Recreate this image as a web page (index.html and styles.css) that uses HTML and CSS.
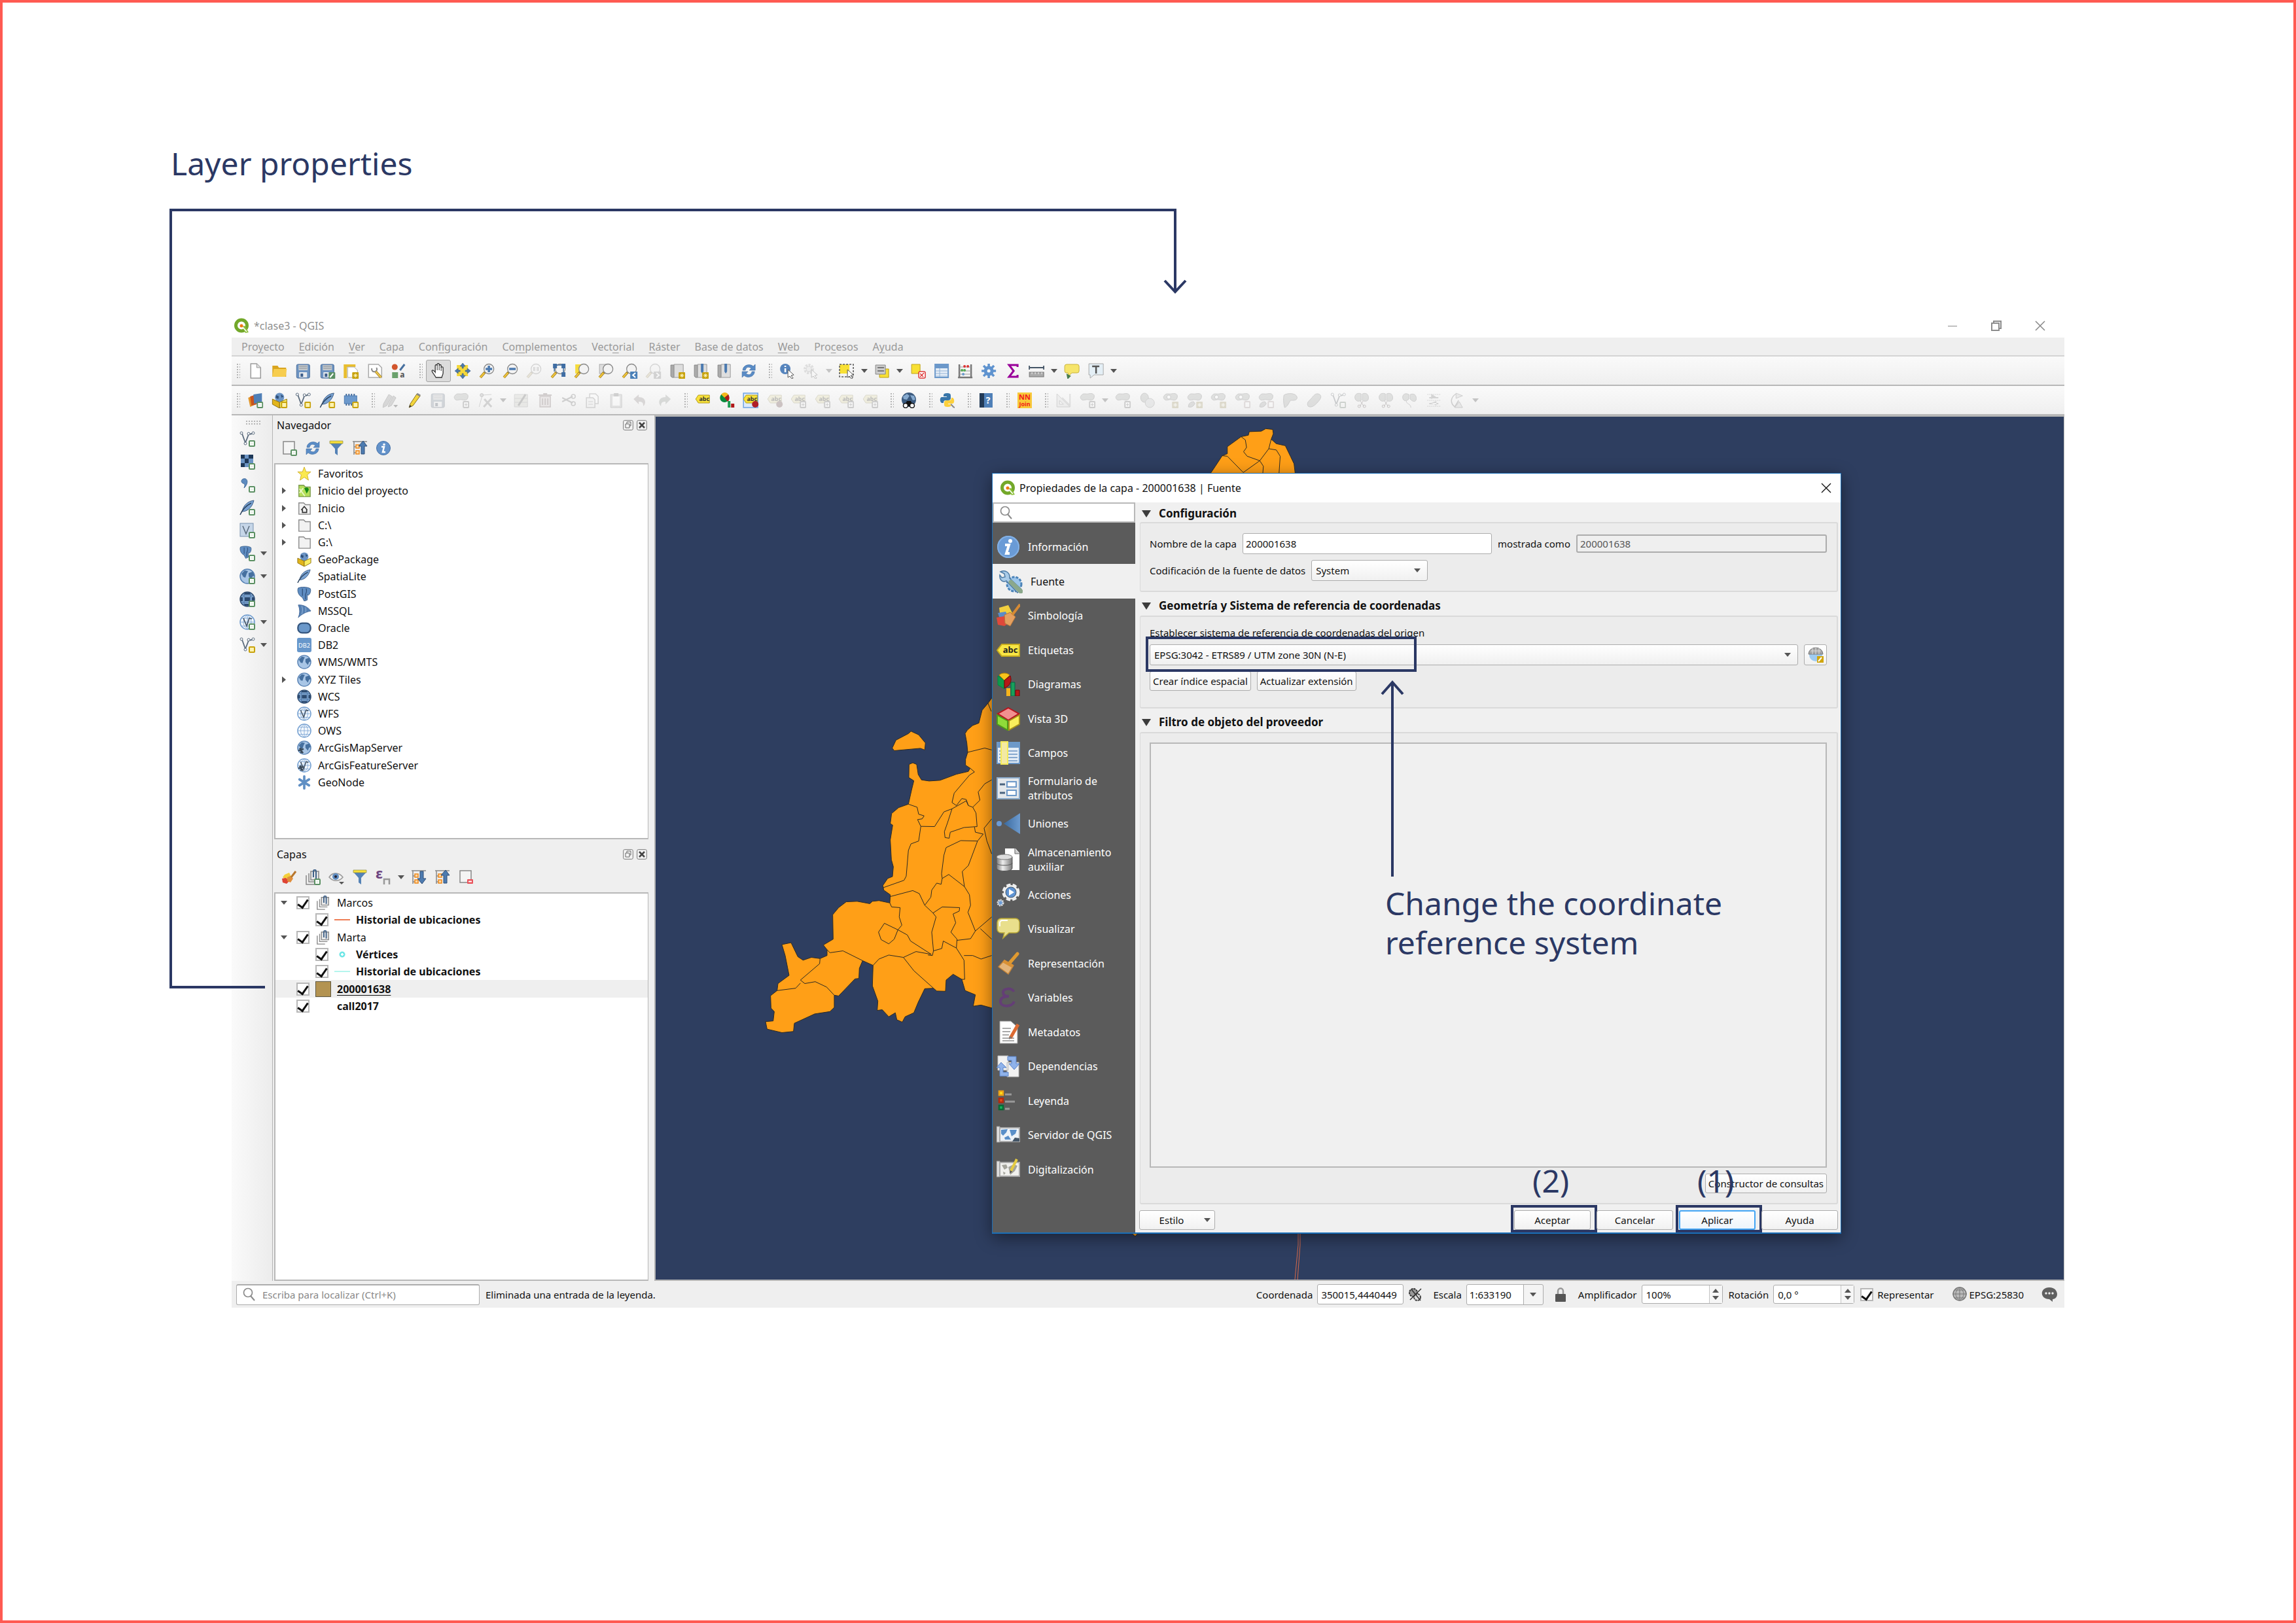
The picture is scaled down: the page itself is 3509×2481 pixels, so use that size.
FILE: index.html
```html
<!DOCTYPE html>
<html lang="es">
<head>
<meta charset="utf-8">
<title>Layer properties</title>
<link rel="stylesheet" href="styles.css">
</head>
<body>
<svg class="defs" aria-hidden="true">
  <!-- badges -->
  <symbol id="b-add" viewBox="0 0 24 24"><rect x="15" y="15" width="8" height="8" rx="1" fill="#fff" stroke="#5b9063" stroke-width="2"/><path d="M19 17v4M17 19h4" stroke="#dcebdc"/></symbol>
  <symbol id="b-new" viewBox="0 0 24 24"><rect x="14" y="14" width="10" height="10" rx="1" fill="#c8a20c"/><path d="M19 16v6M16 19h6M17 17l4 4M21 17l-4 4" stroke="#fff8c8"/></symbol>
  <symbol id="b-yellow" viewBox="0 0 24 24"><rect x="15" y="15" width="8" height="8" rx="1" fill="#fdf3b0" stroke="#c8a20c" stroke-width="2"/></symbol>
  <symbol id="b-gray" viewBox="0 0 24 24"><rect x="15" y="14" width="8" height="9" rx="1" fill="#fff" stroke="#777" stroke-width="2"/><path d="M19 16v5M17 18.500h4" stroke="#777"/></symbol>
  <symbol id="b-red" viewBox="0 0 24 24"><rect x="15" y="14" width="8" height="9" rx="1" fill="#fff" stroke="#c99" stroke-width="2"/></symbol>
  <!-- basic glyphs -->
  <symbol id="logo" viewBox="0 0 24 24"><circle cx="12" cy="11.500" r="8.500" fill="none" stroke="#73a82a" stroke-width="5"/><path d="M13 13l4-1 6 10-5 1z" fill="#8cbf3a"/><path d="M12 12l8 9" stroke="#fff" stroke-width="1.500"/><circle cx="12" cy="12" r="2.500" fill="#ee7913"/></symbol>
  <symbol id="new" viewBox="0 0 24 24"><path d="M5 1h9l6 6v16H5z" fill="#fff" stroke="#9a9a9a" stroke-width="1.500"/><path d="M14 1v6h6" fill="#ddd" stroke="#9a9a9a"/></symbol>
  <symbol id="open" viewBox="0 0 24 24"><path d="M1 4h8l2 3h11v14H1z" fill="#d9a51f"/><path d="M3 9h20l-2 12H1z" fill="#f7cd4e"/></symbol>
  <symbol id="save" viewBox="0 0 24 24"><rect x="2" y="2" width="20" height="21" rx="2" fill="#6c93c2" stroke="#4d6f9b"/><path d="M5 3h14v8H5z" fill="#c3c8cc"/><path d="M6 5h12M6 8h12" stroke="#8d9297"/><path d="M6 14h12v8H6z" fill="#e8ebee"/><path d="M8 16h4v5H8z" fill="#3d5f8c"/></symbol>
  <symbol id="saveas" viewBox="0 0 24 24"><use href="#save"/><rect x="14" y="14" width="10" height="10" rx="1" fill="#5b9063"/><path d="M16 22l5-6" stroke="#fff" stroke-width="2"/></symbol>
  <symbol id="layout" viewBox="0 0 24 24"><path d="M1 2h18v4H6v17H1z" fill="#e8bd2e"/><path d="M7 6h10l5 5v11H7z" fill="#fff" stroke="#aaa"/><use href="#b-new"/></symbol>
  <symbol id="layoutmgr" viewBox="0 0 24 24"><path d="M2 2h15l5 5v15H2z" fill="#fff" stroke="#aaa" stroke-width="1.500"/><path d="M7 8a4 4 0 107-1" fill="none" stroke="#888" stroke-width="2"/><path d="M13 13l8 9" stroke="#a8842a" stroke-width="4"/><path d="M13 13l8 9" stroke="#eec94d" stroke-width="2"/></symbol>
  <symbol id="style" viewBox="0 0 24 24"><circle cx="6" cy="6" r="4.500" fill="#d2552c"/><path d="M21 2l-7 9" stroke="#47709f" stroke-width="3"/><rect x="2" y="14" width="9" height="9" fill="#6aa16c"/><text x="14" y="22" font-family="Noto Sans" font-weight="700" font-size="12" fill="#555">a</text></symbol>
  <symbol id="hand" viewBox="0 0 24 24"><path d="M8 22c-2-4-6-8-6-10s3-1 5 2V4c0-2 3-2 3 0V2c0-2 3-2 3 0v2c0-2 3-2 3 0v3c0-2 3-1 3 0v8c0 3-2 5-2 7z" fill="#fff" stroke="#333" stroke-width="1.300"/><path d="M10 4v7M13 4v7M16 6v6" stroke="#333"/></symbol>
  <symbol id="pan" viewBox="0 0 24 24"><rect x="3" y="3" width="17" height="17" fill="#f5d83a"/><path d="M12 0l4 5h-3v3h-2V5H8zM12 24l-4-5h3v-3h2v3h3zM0 12l5-4v3h3v2H5v3zM24 12l-5 4v-3h-3v-2h3V8z" fill="#4b7ab0" stroke="#34577f" stroke-width=".6"/></symbol>
  <symbol id="mag" viewBox="0 0 24 24"><path d="M2 22l7-8" stroke="#9a7a20" stroke-width="4"/><path d="M2 22l6-7" stroke="#f0c43a" stroke-width="2.500"/><circle cx="15" cy="9" r="7.500" fill="#f3f3f3" stroke="#888" stroke-width="1.300"/></symbol>
  <symbol id="zin" viewBox="0 0 24 24"><use href="#mag"/><path d="M15 4v10M10 9h10" stroke="#4b7ab0" stroke-width="3.500"/></symbol>
  <symbol id="zout" viewBox="0 0 24 24"><use href="#mag"/><path d="M10 9h10" stroke="#4b7ab0" stroke-width="3.500"/></symbol>
  <symbol id="zone" viewBox="0 0 24 24"><use href="#mag"/><path d="M12 6v6M18 6v6M15 7v1M15 10v1" stroke="#666" stroke-width="1.500"/></symbol>
  <symbol id="zfull" viewBox="0 0 24 24"><use href="#mag"/><path d="M4 1h6v7H4zM17 1h6v7h-6zM17 14h6v7h-6z" fill="#3f6da3"/><path d="M6 4v9M8 3h11M20 6v11" stroke="#3f6da3" stroke-width="1.500"/></symbol>
  <symbol id="zsel" viewBox="0 0 24 24"><rect x="2" y="2" width="12" height="14" fill="#f6dc3c"/><use href="#mag"/></symbol>
  <symbol id="zlay" viewBox="0 0 24 24"><rect x="2" y="2" width="12" height="14" fill="#ddd" stroke="#aaa"/><use href="#mag"/></symbol>
  <symbol id="zlast" viewBox="0 0 24 24"><use href="#mag"/><rect x="13" y="13" width="11" height="11" fill="#4b80b8"/><path d="M21 15l-4 3.500 4 3.500" fill="none" stroke="#fff" stroke-width="2"/></symbol>
  <symbol id="znext" viewBox="0 0 24 24"><use href="#mag"/><rect x="13" y="13" width="11" height="11" fill="#888"/><path d="M17 15l4 3.500-4 3.500" fill="none" stroke="#fff" stroke-width="2"/></symbol>
  <symbol id="book" viewBox="0 0 24 24"><path d="M2 3h5v19H4l-2-2z" fill="#aaa" stroke="#888"/><path d="M7 2h14v20H7z" fill="#dedede" stroke="#999"/></symbol>
  <symbol id="newmap" viewBox="0 0 24 24"><use href="#book"/><use href="#b-new"/></symbol>
  <symbol id="bm" viewBox="0 0 24 24"><use href="#book"/><path d="M12 1h4v12l-2 3-2-3z" fill="#4b7ab0"/></symbol>
  <symbol id="newbm" viewBox="0 0 24 24"><use href="#bm"/><use href="#b-new"/></symbol>
  <symbol id="refresh" viewBox="0 0 24 24"><path d="M3 11C3 3 14 0 19 5l3-3v9h-9l3-3c-4-3-8-2-9 3zM21 13c0 8-11 11-16 6l-3 3v-9h9l-3 3c4 3 8 2 9-3z" fill="#5a8cc6" stroke="#3f6da3" stroke-width=".6"/></symbol>
  <symbol id="info" viewBox="0 0 24 24"><circle cx="12" cy="12" r="10.500" fill="#6392ca" stroke="#4673aa"/><circle cx="13" cy="6.500" r="1.800" fill="#fff"/><path d="M9 10h4l-2 8h4" fill="none" stroke="#fff" stroke-width="2.500"/></symbol>
  <symbol id="cursor" viewBox="0 0 24 24"><path d="M13 10l9 8-4 1 3 4-2 1-3-4-3 2z" fill="#fff" stroke="#555"/></symbol>
  <symbol id="ident" viewBox="0 0 24 24"><circle cx="9" cy="9" r="8" fill="#5584bd"/><path d="M9 4v2M9 8v6" stroke="#fff" stroke-width="2.500"/><use href="#cursor"/></symbol>
  <symbol id="action" viewBox="0 0 24 24"><circle cx="9" cy="9" r="6" fill="none" stroke="#aaa" stroke-width="4" stroke-dasharray="3 1.500"/><circle cx="9" cy="9" r="4" fill="#ddd" stroke="#999"/><use href="#cursor"/></symbol>
  <symbol id="select" viewBox="0 0 24 24"><rect x="1" y="2" width="15" height="14" fill="#f8e034"/><rect x="1" y="2" width="21" height="19" fill="none" stroke="#555" stroke-width="1.500" stroke-dasharray="3 2"/><use href="#cursor"/></symbol>
  <symbol id="selval" viewBox="0 0 24 24"><path d="M8 9h14v13H8z" fill="#f8e034" stroke="#b99f16"/><path d="M2 3h15v14H2z" fill="#ccc" stroke="#888"/><path d="M5 7h10M5 12h10" stroke="#777" stroke-width="2"/></symbol>
  <symbol id="desel" viewBox="0 0 24 24"><path d="M2 2h13v14H2z" fill="#f8e034" stroke="#c0a418"/><rect x="13" y="13" width="10" height="10" rx="2" fill="#fff" stroke="#dd3a3a" stroke-width="1.500"/><path d="M15 21l6-6M15 16l5 5" stroke="#dd3a3a" stroke-width="1.500"/></symbol>
  <symbol id="table" viewBox="0 0 24 24"><rect x="2" y="2" width="20" height="20" fill="#e6eef7" stroke="#6b98ca" stroke-width="2"/><path d="M2 3h20v5H2z" fill="#6b98ca"/><path d="M3 12h18M3 16h18M3 20h18M9 8v13" stroke="#93b3d6"/></symbol>
  <symbol id="abacus" viewBox="0 0 24 24"><path d="M3 2v19M21 2v19M1 22h22" stroke="#777" stroke-width="2.500"/><path d="M3 6h18M3 12h18M3 17h18" stroke="#999"/><circle cx="11" cy="5" r="2" fill="#d33"/><circle cx="16" cy="5" r="2" fill="#d33"/><circle cx="7" cy="11" r="2" fill="#5a5"/><circle cx="11" cy="11" r="2" fill="#5a5"/><circle cx="9" cy="17" r="2" fill="#69c"/></symbol>
  <symbol id="gear" viewBox="0 0 24 24"><path d="M12 1v22M1 12h22M4 4l16 16M20 4L4 20" stroke="#5f93cf" stroke-width="3.500"/><circle cx="12" cy="12" r="5" fill="#f4f6f8" stroke="#5f93cf" stroke-width="5"/></symbol>
  <symbol id="sigma" viewBox="0 0 24 24"><path d="M19 6V3H6l7 9-7 9h13v-3" fill="none" stroke="#990099" stroke-width="3"/></symbol>
  <symbol id="ruler" viewBox="0 0 24 24"><path d="M1 4v6M23 4v6M1 7h22" stroke="#456" stroke-width="1.800"/><rect x="1" y="14" width="22" height="7" fill="#aaa" stroke="#777"/><path d="M5 14v3M10 14v3M15 14v3M20 14v3" stroke="#eee"/></symbol>
  <symbol id="tip" viewBox="0 0 24 24"><path d="M4 2h16a3 3 0 013 3v7a3 3 0 01-3 3h-8l-5 5-1-5H4a3 3 0 01-3-3V5a3 3 0 013-3z" fill="#f6e56b" stroke="#c9b33c"/><path d="M5 18l4 2-3 3z" fill="#4a7d4d" stroke="#4a7d4d" stroke-width="2"/></symbol>
  <symbol id="textann" viewBox="0 0 24 24"><path d="M1 1h22v17H9l-6 5v-5H1z" fill="#e4eff6" stroke="#aaa"/><path d="M6 5h11M12 5v11" stroke="#555" stroke-width="2.500"/></symbol>
  <!-- data source glyphs -->
  <symbol id="dsm" viewBox="0 0 24 24"><path d="M1 8l12-5v15L4 22z" fill="#e0952a"/><path d="M4 6l10-3v15l-8 2z" fill="#c8541f"/><path d="M9 3l13-2v14l-12 2z" fill="#4f7fb7"/><use href="#b-add"/></symbol>
  <symbol id="gpkg" viewBox="0 0 24 24"><circle cx="12" cy="7.500" r="7" fill="#6b94c4"/><path d="M7 4l4 2-1 4-4-2zM14 3l4 3-3 2z" fill="#2f4f78"/><path d="M1 10l11 5v9L1 18z" fill="#e2b51b" stroke="#8d7010"/><path d="M23 10l-11 5v9l11-6z" fill="#f9ed62" stroke="#8d7010"/></symbol>
  <symbol id="gpkgnew" viewBox="0 0 24 24"><use href="#gpkg"/><use href="#b-yellow"/></symbol>
  <symbol id="vee" viewBox="0 0 24 24"><path d="M4 4l5 14 5-13 5-1" fill="none" stroke="#5b6b7d" stroke-width="1.800"/><circle cx="3" cy="3" r="2" fill="#fff" stroke="#5b6b7d"/><circle cx="9" cy="19" r="2" fill="#fff" stroke="#5b6b7d"/><circle cx="14" cy="4" r="2" fill="#fff" stroke="#5b6b7d"/><circle cx="21" cy="3" r="2" fill="#fff" stroke="#5b6b7d"/></symbol>
  <symbol id="veenew" viewBox="0 0 24 24"><use href="#vee"/><use href="#b-yellow"/></symbol>
  <symbol id="veeadd" viewBox="0 0 24 24"><use href="#vee"/><use href="#b-add"/></symbol>
  <symbol id="feather" viewBox="0 0 24 24"><path d="M22 1C13 2 6 8 4 18c7 0 15-5 18-17z" fill="#7aa3d3" stroke="#3d5d85"/><path d="M1 23C4 16 10 9 18 5" fill="none" stroke="#2c4460" stroke-width="1.500"/></symbol>
  <symbol id="feathernew" viewBox="0 0 24 24"><use href="#feather"/><use href="#b-yellow"/></symbol>
  <symbol id="featheradd" viewBox="0 0 24 24"><use href="#feather"/><use href="#b-add"/></symbol>
  <symbol id="memory" viewBox="0 0 24 24"><path d="M5 2v18M9 2v18M13 2v18M17 2v18" stroke="#3d6699" stroke-width="2"/><rect x="2" y="5" width="19" height="12" fill="#6c99cc" stroke="#4a78ae"/><use href="#b-yellow"/></symbol>
  <symbol id="raster" viewBox="0 0 24 24"><path d="M2 1h19v19H2z" fill="#6b94c4"/><path d="M2 1h6v6H2zM14 1h7v6h-7zM8 7h6v7H8zM2 14h6v6H2z" fill="#1e3857"/><use href="#b-add"/></symbol>
  <symbol id="comma" viewBox="0 0 24 24"><path d="M6 3c6-2 9 6 1 14 2-5 1-6-1-7-4-1-4-6 0-7z" fill="#5d8bc0" stroke="#426b9b"/><use href="#b-add"/></symbol>
  <symbol id="virtual" viewBox="0 0 24 24"><rect x="1" y="1" width="20" height="20" fill="#c6d6e8" stroke="#7892b0"/><path d="M5 5l5 12 5-12" fill="none" stroke="#5b6b7d" stroke-width="1.500"/><use href="#b-add"/></symbol>
  <symbol id="elephant" viewBox="0 0 24 24"><path d="M2 2c5-2 15-2 20 1 2 4-1 10-3 11l-2-1v9l-5 2-3-6-4-3C2 12 0 6 2 2z" fill="#5f8dc2" stroke="#355a85"/><path d="M9 3v12M15 3c2 4 0 8-1 10v8" fill="none" stroke="#2f4f78" stroke-width="1.300"/></symbol>
  <symbol id="pgadd" viewBox="0 0 24 24"><use href="#elephant" width="19" height="20"/><use href="#b-add"/></symbol>
  <symbol id="mssql" viewBox="0 0 24 24"><path d="M2 2c8-1 17 4 21 10C16 13 8 17 2 23c3-7 3-14 0-21z" fill="#5580b2" stroke="#43689a"/><path d="M8 4c2 5 1 9 0 13M14 6c1 3 1 6 0 8" fill="none" stroke="#9fbde0"/></symbol>
  <symbol id="oracle" viewBox="0 0 24 24"><rect x="1.500" y="4" width="21" height="16" rx="7" fill="#6b98ca" stroke="#35567f" stroke-width="2.500"/></symbol>
  <symbol id="db2" viewBox="0 0 24 24"><rect width="24" height="24" rx="3" fill="#6797cb"/><text x="12" y="16" text-anchor="middle" font-family="Noto Sans" font-size="10" fill="#fff">DB2</text></symbol>
  <symbol id="globe" viewBox="0 0 24 24"><circle cx="12" cy="12" r="11" fill="#a9c6e6" stroke="#547fb2" stroke-width="1.500"/><path d="M3 8l5-5 5 1-2 4-2 6-3-1zM14 7l6-2 3 6-3 1-2 5-4-5z" fill="#46709f"/></symbol>
  <symbol id="grid" viewBox="0 0 24 24"><circle cx="12" cy="12" r="11" fill="#f3f8fd" stroke="#6e9bce" stroke-width="1.500"/><path d="M1 12h22M3 6h18M3 18h18M12 1v22M12 1c-8 6-8 16 0 22M12 1c8 6 8 16 0 22" fill="none" stroke="#85abd6"/></symbol>
  <symbol id="wcs" viewBox="0 0 24 24"><circle cx="12" cy="12" r="11" fill="#86acd6" stroke="#2c486b" stroke-width="1.500"/><path d="M8 9h8v6H8zM1 9h4v6H1zM19 9h4v6h-4zM7 2h10v3H7zM7 19h10v3H7z" fill="#2c4a70"/><path d="M7 2v20M17 2v20M2 7h20M2 17h20" stroke="#4d75a5"/></symbol>
  <symbol id="wfs" viewBox="0 0 24 24"><use href="#grid"/><path d="M6 6l5 12 4-12 4 1" fill="none" stroke="#4b5b6d" stroke-width="1.800"/></symbol>
  <symbol id="arcmap" viewBox="0 0 24 24"><use href="#globe"/><path d="M6 12l1 9M2 17l9-3M4 13l6 8" stroke="#3a4a5a" stroke-width="2.500"/></symbol>
  <symbol id="arcfeat" viewBox="0 0 24 24"><use href="#wfs"/><path d="M6 12l1 9M2 17l9-3M4 13l6 8" stroke="#3a4a5a" stroke-width="2.500"/></symbol>
  <symbol id="wmsadd" viewBox="0 0 24 24"><use href="#globe"/><use href="#b-add"/></symbol>
  <symbol id="wcsadd" viewBox="0 0 24 24"><use href="#wcs"/><use href="#b-add"/></symbol>
  <symbol id="wfsadd" viewBox="0 0 24 24"><use href="#wfs"/><use href="#b-add"/></symbol>
  <symbol id="geonode" viewBox="0 0 24 24"><path d="M12 2v20M4 7l16 10M20 7L4 17" stroke="#5f8fc4" stroke-width="4" stroke-linecap="round"/></symbol>
  <symbol id="star" viewBox="0 0 24 24"><path d="M12 1l3 8h8l-6 5 2 9-7-5-7 5 2-9-6-5h8z" fill="#fbe94e" stroke="#cfae28"/></symbol>
  <symbol id="folder" viewBox="0 0 24 24"><path d="M3 3h8l3 3h8v16H3z" fill="#f2f2f2" stroke="#8a8a8a" stroke-width="1.500"/></symbol>
  <symbol id="home" viewBox="0 0 24 24"><use href="#folder"/><path d="M7 15l5-6 5 6M9 14v5h7v-5" fill="none" stroke="#333" stroke-width="1.800"/></symbol>
  <symbol id="projhome" viewBox="0 0 24 24"><path d="M3 3h8l3 3h8v16H3z" fill="#b6e05a" stroke="#7d9a50" stroke-width="1.500"/><path d="M4 9l9 12M10 8l-6 8" stroke="#eaf7c8" stroke-width="2"/><path d="M12 8c5-3 9 0 7 4l-3 5z" fill="#158a15"/></symbol>
  <!-- editing glyphs -->
  <symbol id="pencil" viewBox="0 0 24 24"><path d="M7 17L17 2l5 3-11 15-6 3z" fill="#f3d53c" stroke="#8a7420"/><path d="M5 23l1-4 3 2z" fill="#333"/><path d="M17 2l5 3" stroke="#888" stroke-width="3"/></symbol>
  <symbol id="pencils" viewBox="0 0 24 24"><path d="M2 17L10 3l5 3-8 14-6 3zM10 18l7-13 4 3-7 12-5 2z" fill="#999" stroke="#666"/><path d="M17 19h7l-3.500 4z" fill="#333"/></symbol>
  <symbol id="blob" viewBox="0 0 24 24"><path d="M2 5c3-5 7-2 11-3s10-1 9 5-6 5-9 4-8 2-10 0-3-4-1-6z" fill="#a9b0a6" stroke="#777"/></symbol>
  <symbol id="blobadd" viewBox="0 0 24 24"><use href="#blob"/><use href="#b-gray"/></symbol>
  <symbol id="blobring" viewBox="0 0 24 24"><use href="#blob"/><circle cx="9" cy="7" r="3" fill="#fff" stroke="#777"/><use href="#b-new"/></symbol>
  <symbol id="blobpart" viewBox="0 0 24 24"><use href="#blob"/><path d="M2 22c0-5 3-8 8-8l2 3c-3 5-6 6-10 5z" fill="#a9b0a6" stroke="#777"/><use href="#b-new"/></symbol>
  <symbol id="delring" viewBox="0 0 24 24"><use href="#blob"/><circle cx="9" cy="7" r="3" fill="#fff" stroke="#777"/><use href="#b-red"/></symbol>
  <symbol id="delpart" viewBox="0 0 24 24"><use href="#blob"/><path d="M2 22c0-5 3-8 8-8l2 3c-3 5-6 6-10 5z" fill="#a9b0a6" stroke="#777"/><use href="#b-red"/></symbol>
  <symbol id="simplify" viewBox="0 0 24 24"><ellipse cx="8" cy="8" rx="6" ry="7" fill="#a9b0a6" stroke="#777"/><ellipse cx="16" cy="16" rx="7" ry="7" fill="#c8ccd0" stroke="#888"/></symbol>
  <symbol id="reshape" viewBox="0 0 24 24"><path d="M2 4c6-4 19-3 20 3s-7 5-10 5c-3 5-5 10-9 11-2-7-2-14-1-19z" fill="#a9b0a6" stroke="#777"/></symbol>
  <symbol id="offset" viewBox="0 0 24 24"><path d="M3 21c-3-5 1-8 4-11s6-9 11-8 6 5 2 10-11 13-17 9z" fill="#a9b0a6" stroke="#777"/></symbol>
  <symbol id="scissor" viewBox="0 0 24 24"><path d="M11 12V2C3-1 0 6 2 10s6 4 9 2zM13 12V2c8-3 10 4 9 8s-6 4-9 2z" fill="#a9b0a6" stroke="#777"/><path d="M10 13l5 8M14 13l-5 8" stroke="#755"/><circle cx="8" cy="21" r="2" fill="none" stroke="#755"/><circle cx="16" cy="21" r="2" fill="none" stroke="#755"/></symbol>
  <symbol id="merge" viewBox="0 0 24 24"><path d="M11 10V3C3-1 0 6 2 10s6 3 9 0zM13 10V3c8-3 10 4 9 8s-6 3-9-1z" fill="#a9b0a6" stroke="#777"/><path d="M7 13c0 5 7 4 7 10" fill="none" stroke="#777"/></symbol>
  <symbol id="attrs" viewBox="0 0 24 24"><path d="M2 3h20M2 12h20M2 21h20" stroke="#888" stroke-dasharray="2 1"/><path d="M8 2l8 5-8 3zM16 13l-8 3 8 4zM5 7h14v2H5zM5 16h14v2H5z" fill="#888"/></symbol>
  <symbol id="rotate" viewBox="0 0 24 24"><path d="M10 2C1 8 1 16 8 22l6-10" fill="none" stroke="#777" stroke-width="1.500"/><path d="M10 1v8l10-4zM8 23h12l-5-9z" fill="#ccc" stroke="#777"/></symbol>
  <symbol id="vertex" viewBox="0 0 24 24"><path d="M2 22l5-18 14-1" fill="none" stroke="#888"/><circle cx="6" cy="4" r="2.500" fill="#aaa" stroke="#666"/><path d="M9 22l12-13M10 10l11 12" stroke="#888" stroke-width="3"/></symbol>
  <symbol id="multiedit" viewBox="0 0 24 24"><path d="M2 3h20v19H2z" fill="#cfd3b8" stroke="#999"/><path d="M2 9h20M2 15h20" stroke="#999"/><path d="M8 20L19 3" stroke="#666" stroke-width="3"/></symbol>
  <symbol id="trash" viewBox="0 0 24 24"><path d="M4 6h16v16H4z" fill="#e3c6c6" stroke="#966" stroke-width="1.500"/><path d="M2 4h20M9 2h6M8 9v10M12 9v10M16 9v10" stroke="#966" stroke-width="1.800"/></symbol>
  <symbol id="cut" viewBox="0 0 24 24"><path d="M2 8l16 8M2 14l16-8" stroke="#777" stroke-width="2"/><circle cx="19" cy="6" r="3" fill="none" stroke="#777" stroke-width="1.500"/><circle cx="19" cy="17" r="3" fill="none" stroke="#777" stroke-width="1.500"/></symbol>
  <symbol id="copy" viewBox="0 0 24 24"><path d="M8 2h9l4 4v11H8z" fill="#fff" stroke="#888" stroke-width="1.500"/><path d="M3 8h10l3 3v12H3z" fill="#eee" stroke="#888" stroke-width="1.500"/><path d="M6 14h7M6 18h7" stroke="#888"/></symbol>
  <symbol id="paste" viewBox="0 0 24 24"><path d="M3 3h17v20H3z" fill="#bbb" stroke="#888"/><path d="M6 6h11v14H6z" fill="#fff"/><path d="M8 1h7v5H8z" fill="#777"/></symbol>
  <symbol id="undo" viewBox="0 0 24 24"><path d="M2 10l8-7v4c9 0 13 7 7 14 0-6-2-7-7-7v4z" fill="#a98f8f"/></symbol>
  <symbol id="redo" viewBox="0 0 24 24"><path d="M22 10l-8-7v4C5 7 1 14 7 21c0-6 2-7 7-7v4z" fill="#8f9f8f"/></symbol>
  <symbol id="tag" viewBox="0 0 24 24"><path d="M1 10l4-6h17v12H5z" fill="#f8e23a" stroke="#b39b1c"/><text x="14" y="13" text-anchor="middle" font-family="Noto Sans" font-weight="700" font-size="9" fill="#333">abc</text></symbol>
  <symbol id="tagpin" viewBox="0 0 24 24"><use href="#tag"/><circle cx="19" cy="18" r="5" fill="#a84848"/></symbol>
  <symbol id="tagbox" viewBox="0 0 24 24"><rect x="1" y="1" width="22" height="22" fill="#dceafb" stroke="#6ea3e3" stroke-width="1.500"/><use href="#tag"/><circle cx="19" cy="18" r="5" fill="#b01e28"/></symbol>
  <symbol id="tagadd" viewBox="0 0 24 24"><use href="#tag"/><use href="#b-gray"/></symbol>
  <symbol id="diag" viewBox="0 0 24 24"><circle cx="8" cy="8" r="7" fill="#0a8a3c"/><path d="M8 8L3 3c3-4 8-4 11 0z" fill="#f4b81c"/><path d="M8 8l6-5c2 4 2 8-1 11z" fill="#b01818"/><path d="M13 13h4v10h-4z" fill="#1c9c50"/><path d="M18 17h5v6h-5z" fill="#b01818"/></symbol>
  <symbol id="metasearch" viewBox="0 0 24 24"><circle cx="12" cy="11" r="11" fill="#3b5a7e"/><path d="M3 6l6-4 4 3-4 6-5-1zM14 4l6 1 2 6-4 1z" fill="#86aacf"/><path d="M5 21l4-8h6l4 8z" fill="#111"/><circle cx="7" cy="20" r="3.500" fill="#fff" stroke="#111" stroke-width="1.500"/><circle cx="17" cy="20" r="3.500" fill="#fff" stroke="#111" stroke-width="1.500"/></symbol>
  <symbol id="python" viewBox="0 0 24 24"><path d="M11 1c5 0 6 1 6 4v4c0 2-2 3-4 3H9c-2 0-3 1-3 4H3c-3-2-3-8 0-9h8V6H6V4c0-2 2-3 5-3z" fill="#3775a9"/><path d="M13 22c-5 0-6-1-6-4v-3c0-2 2-3 4-3h4c2 0 3-1 3-4h2c3 2 3 8 0 9h-7v1h5v1c0 2-2 3-5 3z" fill="#fcd03c"/><path d="M17 18c2 0 3 5 6 5" stroke="#888" stroke-width="2" fill="none"/></symbol>
  <symbol id="help" viewBox="0 0 24 24"><rect x="2" y="1" width="20" height="22" fill="#4f80b8"/><rect x="2" y="1" width="7" height="22" fill="#223a56"/><text x="15" y="17" text-anchor="middle" font-family="Noto Sans" font-weight="700" font-size="14" fill="#fff">?</text></symbol>
  <symbol id="nn" viewBox="0 0 24 24"><rect x="1" width="22" height="24" fill="#f8c93a"/><text x="12" y="11" text-anchor="middle" font-family="Noto Sans" font-weight="700" font-size="11" fill="#f21c1c">NN</text><text x="12" y="21" text-anchor="middle" font-family="Noto Sans" font-weight="700" font-size="9" fill="#f21c1c">Join</text></symbol>
  <symbol id="cad" viewBox="0 0 24 24"><path d="M2 2v20h20zM6 12v6h6z" fill="#ddd" fill-rule="evenodd" stroke="#888"/><path d="M22 2v18L10 8" fill="none" stroke="#aaa" stroke-width="2"/></symbol>
  <!-- panel glyphs -->
  <symbol id="addlay" viewBox="0 0 24 24"><path d="M3 2h17v19H3z" fill="#f4f4f4" stroke="#888" stroke-width="1.500"/><use href="#b-add"/></symbol>
  <symbol id="removelay" viewBox="0 0 24 24"><path d="M3 2h17v18H3z" fill="#f4f4f4" stroke="#888" stroke-width="1.500"/><rect x="14" y="15" width="9" height="7" rx="1" fill="#e9545c"/><path d="M16 18.500h5" stroke="#fff" stroke-width="2"/></symbol>
  <symbol id="filter" viewBox="0 0 24 24"><path d="M2 4h20l-8 9v10l-4-3v-7z" fill="#5482b6"/><path d="M2 1h20v4H2z" fill="#f8e03a" stroke="#8a8a4a" stroke-width=".7"/></symbol>
  <symbol id="listbits" viewBox="0 0 24 24"><path d="M1 2h22M3 2v20M3 10h4M3 19h4" fill="none" stroke="#888" stroke-width="1.500"/><path d="M6 7h5v5H6zM6 16h5v5H6z" fill="#fbd7a6" stroke="#ef8a1c" stroke-width="1.500"/></symbol>
  <symbol id="collapse" viewBox="0 0 24 24"><use href="#listbits"/><path d="M17 1l6 8h-4v12h-5V9h-4z" fill="#4d7bb0" stroke="#2f4f78"/></symbol>
  <symbol id="expand" viewBox="0 0 24 24"><use href="#listbits"/><path d="M17 22l6-8h-4V3h-5v11h-4z" fill="#4d7bb0" stroke="#2f4f78"/></symbol>
  <symbol id="brush" viewBox="0 0 24 24"><path d="M5 8l7-3 3 6-7 6-6-5z" fill="#f3cf3c"/><path d="M1 14l6-1 5 5-4 4-6-2z" fill="#de4434"/><path d="M9 12l5-2 4 4-4 6-5-2z" fill="#e08e3a"/><path d="M15 12l7-9" stroke="#b8762c" stroke-width="3"/></symbol>
  <symbol id="group" viewBox="0 0 24 24"><path d="M2 9v14h13M6 6v13h13" fill="none" stroke="#888" stroke-width="1.500"/><path d="M9 3h12v13H9z" fill="#e9e9e9" stroke="#888" stroke-width="1.500"/><path d="M13 12V3c0-3 4-3 4 0v11" fill="none" stroke="#3f6188" stroke-width="2"/></symbol>
  <symbol id="groupadd" viewBox="0 0 24 24"><use href="#group"/><use href="#b-add"/></symbol>
  <symbol id="eye" viewBox="0 0 24 24"><path d="M1 12C6 4 16 4 22 12c-6 7-15 7-21 0z" fill="#f2f2f2" stroke="#999" stroke-width="1.500"/><circle cx="11" cy="11" r="5" fill="#5e8cc0"/><circle cx="11" cy="11" r="2" fill="#223"/><path d="M16 19h8l-4 4z" fill="#555"/></symbol>
  <symbol id="expr" viewBox="0 0 24 24"><text x="0" y="14" font-family="Noto Sans" font-weight="700" font-size="22" fill="#6d4480">ε</text><path d="M13 23v-8h8v8M15 15h4" fill="none" stroke="#999" stroke-width="2.500"/></symbol>
  <symbol id="search" viewBox="0 0 24 24"><circle cx="10" cy="9" r="6.500" fill="none" stroke="#8a8a8a" stroke-width="1.700"/><path d="M14 14l6 7" stroke="#8a8a8a" stroke-width="2"/></symbol>
  <symbol id="float" viewBox="0 0 16 16"><rect x=".7" y=".7" width="14.600" height="14.600" rx="2" fill="#f4f4f4" stroke="#777"/><path d="M6 3h6v6H6z" fill="none" stroke="#666"/><path d="M4 6h6v6H4z" fill="#f4f4f4" stroke="#666"/></symbol>
  <symbol id="shut" viewBox="0 0 16 16"><rect x=".7" y=".7" width="14.600" height="14.600" rx="2" fill="#f4f4f4" stroke="#777"/><path d="M4 4l8 8M12 4l-8 8" stroke="#444" stroke-width="2.500"/></symbol>
  <!-- status bar glyphs -->
  <symbol id="extents" viewBox="0 0 24 24"><circle cx="9" cy="9" r="6" fill="#999" stroke="#333" stroke-width="2" stroke-dasharray="3 1"/><circle cx="15" cy="16" r="5" fill="#ddd" stroke="#444" stroke-width="2" stroke-dasharray="3 1"/><path d="M4 20L21 3M6 4l14 17" stroke="#333" stroke-width="1.500"/></symbol>
  <symbol id="lock" viewBox="0 0 24 24"><path d="M8 12V7c0-6 8-6 8 0v5" fill="none" stroke="#999" stroke-width="2.500"/><rect x="4" y="11" width="16" height="12" rx="1" fill="#555"/></symbol>
  <symbol id="crs" viewBox="0 0 24 24"><circle cx="12" cy="11" r="10" fill="#bbb" stroke="#777" stroke-width="1.500"/><path d="M1 11h22M4 5h16M4 17h16M12 1v20M12 1c-8 6-8 14 0 20M12 1c8 6 8 14 0 20" fill="none" stroke="#777"/></symbol>
  <symbol id="msg" viewBox="0 0 24 24"><path d="M12 1c15 0 15 18 5 18v4l-5-4C-3 19-3 1 12 1z" fill="#606060"/><circle cx="7" cy="10" r="1.700" fill="#eee"/><circle cx="12" cy="10" r="1.700" fill="#eee"/><circle cx="17" cy="10" r="1.700" fill="#eee"/></symbol>
  <symbol id="crspick" viewBox="0 0 24 24"><circle cx="12" cy="12" r="10" fill="#9fcbf0"/><path d="M1 11a11 10 0 0122 0z" fill="#a5a5a5" stroke="#777"/><path d="M4 6h16M12 1v10M7 2v9M17 2v9" stroke="#ddd"/><rect x="14" y="14" width="10" height="10" fill="#d1a60e"/><path d="M16 22l5-6" stroke="#fff" stroke-width="2"/></symbol>
</svg>

<div class="sheet">
  <h1 class="note">Layer properties</h1>

  <div class="app">
    <header class="titlebar">
      <svg class="ic"><use href="#logo"/></svg>
      <span>*clase3 - QGIS</span>
      <div class="winbtns">
        <button aria-label="Minimizar"><svg viewBox="0 0 16 16"><path d="M1 8.500h14" stroke="#888"/></svg></button>
        <button aria-label="Restaurar"><svg viewBox="0 0 16 16"><path d="M4 4V1h11v11h-3M1 4h11v11H1z" fill="none" stroke="#8c8c8c" stroke-width="2"/></svg></button>
        <button aria-label="Cerrar"><svg viewBox="0 0 16 16"><path d="M1 1l14 14M15 1L1 15" stroke="#888" stroke-width="1.500"/></svg></button>
      </div>
    </header>
    <nav class="menu">
      <a href="#">Pro<u>y</u>ecto</a><a href="#"><u>E</u>dición</a><a href="#"><u>V</u>er</a><a href="#"><u>C</u>apa</a><a href="#">Con<u>f</u>iguración</a><a href="#">Co<u>m</u>plementos</a><a href="#">Vect<u>o</u>rial</a><a href="#"><u>R</u>áster</a><a href="#">Base de <u>d</u>atos</a><a href="#"><u>W</u>eb</a><a href="#">Pro<u>c</u>esos</a><a href="#">A<u>y</u>uda</a>
    </nav>

    <div class="toolbar">
      <i class="grip"></i>
      <div class="tools w7">
        <svg><use href="#new"/></svg><svg><use href="#open"/></svg><svg><use href="#save"/></svg><svg><use href="#saveas"/></svg><svg><use href="#layout"/></svg><svg><use href="#layoutmgr"/></svg><svg><use href="#style"/></svg>
      </div>
      <i class="grip"></i>
      <div class="tools w14">
        <svg class="pressed"><use href="#hand"/></svg><svg><use href="#pan"/></svg><svg><use href="#zin"/></svg><svg><use href="#zout"/></svg><svg class="off"><use href="#zone"/></svg><svg><use href="#zfull"/></svg><svg><use href="#zsel"/></svg><svg><use href="#zlay"/></svg><svg><use href="#zlast"/></svg><svg class="off"><use href="#znext"/></svg><svg><use href="#newmap"/></svg><svg><use href="#newbm"/></svg><svg><use href="#bm"/></svg><svg><use href="#refresh"/></svg>
      </div>
      <i class="grip"></i>
      <div class="tools w12">
        <svg><use href="#ident"/></svg><svg class="off"><use href="#action"/></svg><b class="drop off"></b><svg><use href="#select"/></svg><b class="drop"></b><svg><use href="#selval"/></svg><b class="drop"></b><svg><use href="#desel"/></svg><svg><use href="#table"/></svg><svg><use href="#abacus"/></svg><svg><use href="#gear"/></svg><svg><use href="#sigma"/></svg><svg><use href="#ruler"/></svg><b class="drop"></b><svg><use href="#tip"/></svg><svg><use href="#textann"/></svg><b class="drop"></b>
      </div>
    </div>

    <div class="toolbar">
      <i class="grip"></i>
      <div class="tools w5">
        <svg><use href="#dsm"/></svg><svg><use href="#gpkgnew"/></svg><svg><use href="#veenew"/></svg><svg><use href="#feathernew"/></svg><svg><use href="#memory"/></svg>
      </div>
      <i class="grip"></i>
      <div class="tools w13">
        <svg class="off"><use href="#pencils"/></svg><svg><use href="#pencil"/></svg><svg class="off"><use href="#save"/></svg><svg class="off"><use href="#blobadd"/></svg><svg class="off"><use href="#vertex"/></svg><b class="drop off"></b><svg class="off"><use href="#multiedit"/></svg><svg class="off"><use href="#trash"/></svg><svg class="off"><use href="#cut"/></svg><svg class="off"><use href="#copy"/></svg><svg class="off"><use href="#paste"/></svg><svg class="off"><use href="#undo"/></svg><svg class="off"><use href="#redo"/></svg>
      </div>
      <i class="grip"></i>
      <div class="tools w8">
        <svg><use href="#tag"/></svg><svg><use href="#diag"/></svg><svg><use href="#tagbox"/></svg><svg class="off"><use href="#tagpin"/></svg><svg class="off"><use href="#tagadd"/></svg><svg class="off"><use href="#tagadd"/></svg><svg class="off"><use href="#tagadd"/></svg><svg class="off"><use href="#tagadd"/></svg>
      </div>
      <i class="grip"></i><div class="tools w1"><svg><use href="#metasearch"/></svg></div>
      <i class="grip"></i><div class="tools w1"><svg><use href="#python"/></svg></div>
      <i class="grip"></i><div class="tools w1"><svg><use href="#help"/></svg></div>
      <i class="grip"></i><div class="tools w1"><svg><use href="#nn"/></svg></div>
      <i class="grip"></i>
      <div class="tools w18 allOff">
        <svg><use href="#cad"/></svg><svg><use href="#blobadd"/></svg><b class="drop"></b><svg><use href="#blobadd"/></svg><svg><use href="#simplify"/></svg><svg><use href="#blobring"/></svg><svg><use href="#blobpart"/></svg><svg><use href="#blobring"/></svg><svg><use href="#delring"/></svg><svg><use href="#delpart"/></svg><svg><use href="#reshape"/></svg><svg><use href="#offset"/></svg><svg><use href="#veeadd"/></svg><svg><use href="#scissor"/></svg><svg><use href="#scissor"/></svg><svg><use href="#merge"/></svg><svg><use href="#attrs"/></svg><svg><use href="#rotate"/></svg><b class="drop"></b>
      </div>
    </div>

    <main class="work">
      <div class="sidetools">
        <i class="grip flat"></i>
        <div><svg><use href="#veeadd"/></svg></div>
        <div><svg><use href="#raster"/></svg></div>
        <div><svg><use href="#comma"/></svg></div>
        <div><svg><use href="#featheradd"/></svg></div>
        <div><svg><use href="#virtual"/></svg></div>
        <div><svg><use href="#pgadd"/></svg><b class="drop"></b></div>
        <div><svg><use href="#wmsadd"/></svg><b class="drop"></b></div>
        <div><svg><use href="#wcsadd"/></svg></div>
        <div><svg><use href="#wfsadd"/></svg><b class="drop"></b></div>
        <div><svg><use href="#veenew"/></svg><b class="drop"></b></div>
      </div>

      <div class="docks">
        <section class="dock">
          <h2>Navegador<span><svg><use href="#float"/></svg><svg><use href="#shut"/></svg></span></h2>
          <div class="docktools"><svg><use href="#addlay"/></svg><svg><use href="#refresh"/></svg><svg><use href="#filter"/></svg><svg><use href="#collapse"/></svg><svg><use href="#info"/></svg></div>
          <div class="listbox browser">
            <ul class="tree t19">
              <li><i></i><svg><use href="#star"/></svg>Favoritos</li>
              <li><i class="closed"></i><svg><use href="#projhome"/></svg>Inicio del proyecto</li>
              <li><i class="closed"></i><svg><use href="#home"/></svg>Inicio</li>
              <li><i class="closed"></i><svg><use href="#folder"/></svg>C:\</li>
              <li><i class="closed"></i><svg><use href="#folder"/></svg>G:\</li>
              <li><i></i><svg><use href="#gpkg"/></svg>GeoPackage</li>
              <li><i></i><svg><use href="#feather"/></svg>SpatiaLite</li>
              <li><i></i><svg><use href="#elephant"/></svg>PostGIS</li>
              <li><i></i><svg><use href="#mssql"/></svg>MSSQL</li>
              <li><i></i><svg><use href="#oracle"/></svg>Oracle</li>
              <li><i></i><svg><use href="#db2"/></svg>DB2</li>
              <li><i></i><svg><use href="#globe"/></svg>WMS/WMTS</li>
              <li><i class="closed"></i><svg><use href="#globe"/></svg>XYZ Tiles</li>
              <li><i></i><svg><use href="#wcs"/></svg>WCS</li>
              <li><i></i><svg><use href="#wfs"/></svg>WFS</li>
              <li><i></i><svg><use href="#grid"/></svg>OWS</li>
              <li><i></i><svg><use href="#arcmap"/></svg>ArcGisMapServer</li>
              <li><i></i><svg><use href="#arcfeat"/></svg>ArcGisFeatureServer</li>
              <li><i></i><svg><use href="#geonode"/></svg>GeoNode</li>
            </ul>
          </div>
        </section>
        <section class="dock">
          <h2>Capas<span><svg><use href="#float"/></svg><svg><use href="#shut"/></svg></span></h2>
          <div class="docktools"><svg><use href="#brush"/></svg><svg><use href="#groupadd"/></svg><svg><use href="#eye"/></svg><svg><use href="#filter"/></svg><svg><use href="#expr"/></svg><b class="drop"></b><svg><use href="#expand"/></svg><svg><use href="#collapse"/></svg><svg><use href="#removelay"/></svg></div>
          <div class="listbox layers">
            <ul class="tree t7">
              <li><i class="opened"></i><label><input type="checkbox" checked><svg><use href="#group"/></svg>Marcos</label></li>
              <li class="child"><label><input type="checkbox" checked><span class="line coral"></span>Historial de ubicaciones</label></li>
              <li><i class="opened"></i><label><input type="checkbox" checked><svg><use href="#group"/></svg>Marta</label></li>
              <li class="child"><label><input type="checkbox" checked><span class="dot"></span>Vértices</label></li>
              <li class="child"><label><input type="checkbox" checked><span class="line aqua"></span>Historial de ubicaciones</label></li>
              <li class="current"><i></i><label><input type="checkbox" checked><span class="fill"></span><u>200001638</u></label></li>
              <li class="strong"><i></i><label><input type="checkbox" checked><span class="blank"></span>call2017</label></li>
            </ul>
          </div>
        </section>
      </div>

      <div class="map">
        <svg class="land" viewBox="1002 637 2151 1319" preserveAspectRatio="xMinYMin meet">
          <g transform="translate(1140 1050) scale(.3333 .3571)">
            <path class="area" d="M671 262L688 228 745 200 757 190 792 205 823 240 820 270 800 263 680 273Z"/>
            <path class="area" d="M1140 40L1127 48 1110 70 1083 100 1068 155 1040 165 1015 185 1005 200 1013 240 1017 280 1007 310 1007 335 1028 348 1020 362 965 374 890 400 840 403 805 398 790 375 783 332 765 325 748 332 747 388 770 402 760 440 745 502 700 517 668 542 662 585 673 592 662 655 667 740 676 770 672 812 650 820 628 850 632 870 662 890 660 925 610 915 580 918 568 928 510 918 460 920 425 945 398 975 400 1080 355 1105 372 1125 372 1150 340 1163 300 1158 262 1170 238 1155 207 1095 165 1103 180 1150 198 1235 147 1270 143 1300 113 1322 115 1375 130 1390 125 1430 90 1433 97 1465 165 1480 218 1475 222 1440 315 1400 385 1390 405 1372 405 1320 425 1323 500 1250 518 1248 520 1205 535 1172 583 1192 580 1280 605 1345 602 1385 625 1382 655 1412 685 1395 692 1425 717 1435 730 1412 770 1395 790 1350 820 1292 860 1290 875 1302 915 1303 918 1255 950 1230 990 1252 1005 1300 1052 1318 1042 1367 1078 1362 1140 1378Z"/>
            <path class="edge" d="M1110 70L1125 105M1017 280L1095 262 1127 270M1028 348L1048 364 1025 378 955 455 945 495 965 508 990 478 1010 482 1020 508 1040 515 1073 485 1065 450 1095 415 1127 398M745 502L785 515 792 545 817 552 808 565 787 568 802 597 792 660 757 672 745 700 735 810 725 828 628 860M802 597L865 598 908 535 945 522 1010 488 1020 508M945 522L925 580 910 620 913 645 932 648 937 622 1000 602 1060 598 1055 540 1040 515M1048 600L1052 622 1088 630M1127 565L1092 605 1105 660 1127 715M918 688L985 658 1062 660 1088 630M1062 660L1020 765 992 790 1002 855 930 803 900 820 897 800 908 720 918 688M900 820L895 845 875 840 852 870 848 900 820 935 858 968 900 942 980 945 978 960 950 972 962 1010 940 1050 968 1080 965 1118 905 1088 898 1120 860 1130 852 1050 872 985 858 968M660 898L765 872 795 885 820 935M660 925L668 942 707 945 703 985 715 1020 697 1040 635 1012 608 1050 620 1082 655 1100 680 1080 697 1040 740 1062 755 1088 850 1145 780 1133 722 1158 655 1148 610 1165 583 1192M722 1158L770 1215 860 1290M372 1125L385 1138 445 1130 535 1172M340 1163L338 1185 250 1255 270 1270 318 1262 370 1285 405 1320M143 1300L228 1290 250 1268M1002 855L1025 890 1030 935 1018 965 1052 1045 1127 985M1052 1045L1030 1078 968 1085M965 1118L1000 1170 1003 1252 990 1252M1000 1150L1040 1150 1078 1165 1127 1150M1075 1035L1127 1080M860 1130L855 1150 835 1148"/>
          </g>
          <g transform="translate(1480 640) scale(.4591 .3827)">
            <path class="area" d="M790 240L808 215 822 190 845 148 862 140 862 112 908 72 932 66 935 52 975 50 990 40 1013 43 1015 60 1008 82 1025 100 1055 108 1072 150 1084 180 1090 240Z"/>
            <path class="edge" d="M845 148L862 150 915 215 970 168 1000 120 1008 82M908 72L922 85 926 115 916 132 928 150 970 168 982 190 980 220M1000 120L1025 125 1038 150 1034 220"/>
          </g>
          <path class="area" d="M1727 1883h14l-6 7z"/>
          <path class="track" d="M1984 1883v20l-5 53M1987 1883v20l-4 53"/>
        </svg>

        <div class="dialog" role="dialog" aria-label="Propiedades de la capa">
          <div class="dlgtitle"><svg class="ic"><use href="#logo"/></svg><span>Propiedades de la capa - 200001638 | Fuente</span><button aria-label="Cerrar"><svg viewBox="0 0 16 16"><path d="M1 1l14 14M15 1L1 15" stroke="#111" stroke-width="1.300"/></svg></button></div>
          <div class="dlgbody">
            <aside>
              <label class="find"><svg class="ic"><use href="#search"/></svg><input type="text" aria-label="Buscar"></label>
              <nav class="pages">
                <a href="#"><svg viewBox="0 0 36 36"><circle cx="18" cy="18" r="17" fill="#6a9bd6"/><circle cx="18" cy="18" r="16" fill="none" stroke="#83b0e4" stroke-width="2"/><circle cx="21" cy="9" r="3" fill="#fff"/><path d="M13 15h6l-4 13h5" fill="none" stroke="#fff" stroke-width="4"/></svg>Información</a>
                <a href="#" class="sel"><svg viewBox="0 0 36 36"><circle cx="23" cy="22" r="11" fill="#9cc5ea" stroke="#4b83b8" stroke-width="3" stroke-dasharray="4 2"/><path d="M2 3l6 3 1 5-5 1-3-4c-1 7 4 12 10 9l17 18 6-5-18-17C17 5 10-1 2 3z" fill="#a9cbe8" stroke="#4e7ba5" stroke-width="1.500"/><path d="M18 19l15 14" stroke="#8ba88b" stroke-width="7" stroke-linecap="round"/></svg>Fuente</a>
                <a href="#"><svg viewBox="0 0 36 36"><path d="M4 6l14-4 6 12-18 8z" fill="#f1cf3e"/><path d="M2 14l12-2 4 8-12 6z" fill="#5b8cc8"/><path d="M0 21l12-2 8 10-8 5-10-2z" fill="#e0483a"/><path d="M12 17l9-4 8 7-8 14-8-4z" fill="#e5a060" stroke="#b5763a"/><path d="M24 17L36 1" stroke="#d68a34" stroke-width="4"/></svg>Simbología</a>
                <a href="#"><svg viewBox="0 0 36 36"><path d="M1 18l7-9h27v18H8z" fill="#f8e544" stroke="#c5ab1e" stroke-width="2"/><text x="21" y="22" text-anchor="middle" font-family="Noto Sans" font-weight="700" font-size="13" fill="#222">abc</text></svg>Etiquetas</a>
                <a href="#"><svg viewBox="0 0 36 36"><path d="M12 12L2 5v14l10 6z" fill="#0f9a4a" stroke="#084"/><path d="M12 12L4 4c4-4 12-4 16 0z" fill="#f8c41c" stroke="#b80"/><path d="M12 12l9-7c2 6 2 14-9 19z" fill="#b41818" stroke="#700"/><path d="M15 24h6v12h-6z" fill="#f5b41c"/><path d="M22 15h6v21h-6z" fill="#18a05a" stroke="#064"/><path d="M29 27h6v9h-6z" fill="#b41818" stroke="#700"/></svg>Diagramas</a>
                <a href="#"><svg viewBox="0 0 36 36"><path d="M18 1l16 9-16 10L2 10z" fill="#f29090" stroke="#b8141c" stroke-width="2"/><path d="M1 12l16 9v14L1 26z" fill="#8fdc3a" stroke="#4f9a1a" stroke-width="2"/><path d="M35 12l-16 9v14l16-9z" fill="#f9ee5c" stroke="#a8921a" stroke-width="2"/></svg>Vista 3D</a>
                <a href="#"><svg viewBox="0 0 36 36"><rect x="1" y="2" width="34" height="32" fill="#e4edf6" stroke="#6d99c9" stroke-width="2"/><path d="M1 3h34v7H1z" fill="#6d99c9"/><path d="M4 15h28M4 20h28M4 25h28M4 30h28" stroke="#87a9cf" stroke-width="2"/><rect x="7" y="1" width="10" height="34" fill="#f3e9a4" stroke="#f5ea58" stroke-width="2"/></svg>Campos</a>
                <a href="#" class="two"><svg viewBox="0 0 36 36"><rect x="1" y="2" width="34" height="32" fill="#e4e8ec" stroke="#8aa9c9" stroke-width="2"/><path d="M5 12h8M5 25h8" stroke="#49637f" stroke-width="3"/><rect x="16" y="8" width="14" height="8" fill="#fff" stroke="#6d99c9" stroke-width="2"/><rect x="16" y="21" width="14" height="8" fill="#fff" stroke="#6d99c9" stroke-width="2"/></svg>Formulario de atributos</a>
                <a href="#"><svg viewBox="0 0 36 36"><linearGradient id="cone"><stop offset="0" stop-color="#3a6a9f"/><stop offset="1" stop-color="#6d9bcf"/></linearGradient><circle cx="4" cy="18" r="4" fill="#6a9bd6"/><path d="M11 18L36 2v32z" fill="url(#cone)"/></svg>Uniones</a>
                <a href="#" class="two"><svg viewBox="0 0 36 36"><linearGradient id="metal"><stop offset="0" stop-color="#777"/><stop offset=".4" stop-color="#eee"/><stop offset="1" stop-color="#777"/></linearGradient><path d="M13 1h16l6 7v26H13z" fill="#fff"/><path d="M28 1v8h7" fill="#ccc" stroke="#666"/><path d="M0 14v17c0 6 24 6 24 0V14z" fill="url(#metal)" stroke="#555"/><ellipse cx="12" cy="14" rx="12" ry="4" fill="#ddd" stroke="#777"/><path d="M0 23c0 5 24 5 24 0" fill="none" stroke="#555"/></svg>Almacenamiento auxiliar</a>
                <a href="#"><svg viewBox="0 0 36 36"><circle cx="22" cy="14" r="11" fill="#eee" stroke="#eee" stroke-width="5" stroke-dasharray="6 3"/><circle cx="22" cy="14" r="8" fill="#5f93d2" stroke="#456"/><path d="M19 9l8 5-8 5z" fill="#fff"/><circle cx="6" cy="30" r="4" fill="#6a9bd6" stroke="#ddd" stroke-width="3" stroke-dasharray="2 1"/></svg>Acciones</a>
                <a href="#"><svg viewBox="0 0 36 36"><path d="M7 2h22a6 6 0 016 6v10a6 6 0 01-6 6H19l-9 8 2-8H7a6 6 0 01-6-6V8a6 6 0 016-6z" fill="#e9df8c" stroke="#b9a836" stroke-width="1.500"/><path d="M5 14V9a4 4 0 014-4h8" fill="none" stroke="#fff" stroke-width="2"/></svg>Visualizar</a>
                <a href="#"><svg viewBox="0 0 36 36"><path d="M20 17L32 3" stroke="#e09a30" stroke-width="5" stroke-linecap="round"/><path d="M12 13l14 8-8 13L3 23z" fill="#e3b47a" stroke="#c48438" stroke-width="1.500"/><path d="M12 12l14 8-3 4-14-8z" fill="#d89034"/></svg>Representación</a>
                <a href="#"><svg viewBox="0 0 36 36"><path d="M26 9C25 3 10 3 10 10c0 5 5 6 9 6-7 0-13 2-13 8 0 9 18 9 21 0" fill="none" stroke="#643e76" stroke-width="4"/></svg>Variables</a>
                <a href="#"><svg viewBox="0 0 36 36"><path d="M5 1h17l10 9v25H5z" fill="#fff" stroke="#999"/><path d="M9 12h13M9 17h12M9 22h10M9 27h18M9 31h18" stroke="#aaa" stroke-width="2"/><path d="M21 27L33 6" stroke="#dc6a32" stroke-width="5"/><path d="M19 29l1-5 4 2z" fill="#777"/></svg>Metadatos</a>
                <a href="#"><svg viewBox="0 0 36 36"><path d="M2 2h16v22H2zM16 12h18v22H16z" fill="#f2f2f2" stroke="#bbb"/><path d="M17 3h13v11h5l-8 9-8-9h4V9h-6z" fill="#8fb2ea" stroke="#5a83c8"/><path d="M18 33H5V20H0l7-8 8 8h-5v7h8z" fill="#8fb2ea" stroke="#5a83c8"/></svg>Dependencias</a>
                <a href="#"><svg viewBox="0 0 36 36"><path d="M4 3h6v6H4z" fill="#ffe21c" stroke="#eaa017" stroke-width="2.500"/><path d="M4 14h6v6H4z" fill="#e64a19" stroke="#b22a0e" stroke-width="2.500"/><path d="M4 25h6v6H4z" fill="#14b45c" stroke="#086a34" stroke-width="2.500"/><path d="M13 8h10M13 19h15M13 30h7" stroke="#999" stroke-width="3"/></svg>Leyenda</a>
                <a href="#"><svg viewBox="0 0 36 36"><path d="M0 5h5v24H0z" fill="#ddd" stroke="#999"/><path d="M5 7h30v21H5z" fill="#eef3f8" stroke="#aaa" stroke-width="2"/><path d="M7 10l10-1-2 5-5 5-3-3zM20 10h11l-2 6-6 4zM12 22l6-3 4 6h-9z" fill="#5a8fc8"/><path d="M24 28l4-6 7 1v5z" fill="#456"/></svg>Servidor de QGIS</a>
                <a href="#"><svg viewBox="0 0 36 36"><path d="M0 5h5v24H0z" fill="#ddd" stroke="#999"/><path d="M5 7h30v21H5z" fill="#f0f0ee" stroke="#aaa" stroke-width="2"/><path d="M8 11l7-1 2 5-5 3zM18 14l8-4 6 2-4 8-7 6zM10 21l4 2-3 3z" fill="#a3a39b"/><path d="M22 20L31 2" stroke="#e4cb42" stroke-width="4"/><path d="M20 24l1-5 3 2z" fill="#555"/></svg>Digitalización</a>
              </nav>
            </aside>

            <div class="pane">
              <h3>Configuración</h3>
              <div class="box">
                <div class="row">
                  <label for="lname">Nombre de la capa</label><input id="lname" type="text" value="200001638">
                  <label for="lshown">mostrada como</label><input id="lshown" class="ro" type="text" value="200001638" readonly>
                </div>
                <div class="row">
                  <label for="enc">Codificación de la fuente de datos</label>
                  <span class="combo enc"><select id="enc"><option>System</option></select></span>
                </div>
              </div>
              <h3>Geometría y Sistema de referencia de coordenadas</h3>
              <div class="box crs">
                <label for="crs-sel">Establecer sistema de referencia de coordenadas del origen</label>
                <div class="row">
                  <span class="combo wide"><select id="crs-sel"><option>EPSG:3042 - ETRS89 / UTM zone 30N (N-E)</option></select><i class="mark"></i></span>
                  <button class="pick" aria-label="Seleccionar SRC"><svg class="ic"><use href="#crspick"/></svg></button>
                </div>
                <div class="row"><button>Crear índice espacial</button><button>Actualizar extensión</button></div>
                <svg class="pointer" viewBox="0 0 40 306"><path d="M20 304V8M4 25L20 7l16 18"/></svg>
              </div>
              <h3>Filtro de objeto del proveedor</h3>
              <div class="box filter">
                <textarea aria-label="Filtro" readonly></textarea>
                <button>Constructor de consultas</button>
                <p class="note change">Change the coordinate reference system</p>
              </div>
              <footer>
                <button class="estilo">Estilo<b class="drop"></b></button>
                <span class="act"><button>Aceptar</button><i class="mark"></i><span class="note step">(2)</span></span>
                <span class="act"><button>Cancelar</button></span>
                <span class="act"><button class="primary">Aplicar</button><i class="mark"></i><span class="note step">(1)</span></span>
                <span class="act"><button>Ayuda</button></span>
              </footer>
            </div>
          </div>
        </div>
      </div>
    </main>

    <footer class="status">
      <label class="locator"><svg class="ic"><use href="#search"/></svg><input type="text" aria-label="Localizar" placeholder="Escriba para localizar (Ctrl+K)"></label>
      <span class="msg">Eliminada una entrada de la leyenda.</span>
      <label for="coord">Coordenada</label><input id="coord" type="text" value="350015,4440449">
      <svg class="ic"><use href="#extents"/></svg>
      <label for="scale">Escala</label><span class="combo scale"><select id="scale"><option>1:633190</option></select></span>
      <svg class="ic"><use href="#lock"/></svg>
      <label for="amp">Amplificador</label><span class="spin"><input id="amp" type="text" value="100%"><b></b></span>
      <label for="rot">Rotación</label><span class="spin"><input id="rot" type="text" value="0,0 °"><b></b></span>
      <label class="render"><input type="checkbox" checked>Representar</label>
      <span class="epsg"><svg class="ic"><use href="#crs"/></svg>EPSG:25830</span>
      <svg class="ic"><use href="#msg"/></svg>
    </footer>
  </div>

  <svg class="route" viewBox="0 0 1560 1200"><path d="M148 1192H4V4H1539V126M1523 112l16 17 16-17"/></svg>
</div>
</body>
</html>
```
FILE: styles.css
```css
* { box-sizing: border-box; }

body {
  margin: 0;
  background: #fff;
  color: #111;
  font: 16px/22px "Noto Sans", "Open Sans", sans-serif;
}

h1, h2, h3, p, ul { margin: 0; padding: 0; font-weight: 400; font-size: inherit; }
ul { list-style: none; }
a { color: inherit; text-decoration: none; }
svg { display: block; flex: none; }
.defs { display: none; }
.ic { width: 24px; height: 24px; }

button, input, select, textarea { font: inherit; color: inherit; margin: 0; }
button { padding: 0; border: 0; background: none; }

.sheet {
  position: relative;
  min-height: 100vh;
  padding: 216px 350px 0;
  border: 4px solid #ff5a52;
}

/* annotations */
.note { color: #2b3864; font-size: 48px; line-height: 60px; }
h1.note { margin: 0 0 200px -93px; }

.route {
  position: absolute;
  left: 253px;
  top: 313px;
  width: 1560px;
  height: 1200px;
  pointer-events: none;
}
.route path, .pointer path { fill: none; stroke: #2b3864; stroke-width: 4; }

.mark { position: absolute; border: 4px solid #2b3864; pointer-events: none; }

/* application window */
.app { background: #efefef; }

.titlebar {
  display: flex;
  align-items: center;
  gap: 7px;
  height: 36px;
  padding-left: 3px;
  background: #fff;
  color: #8f8f8f;
}
.winbtns { display: flex; margin-left: auto; padding-right: 4px; }
.winbtns button { width: 67px; display: grid; place-items: center; }
.winbtns svg, .dlgtitle button svg { width: 16px; height: 16px; }

.menu {
  display: flex;
  gap: 22px;
  height: 29px;
  padding: 3px 15px 0;
  border-bottom: 2px solid #d4d4d4;
  color: #999;
}
.menu u { text-underline-offset: 3px; }

.toolbar {
  display: flex;
  align-items: center;
  height: 45px;
  border-bottom: 2px solid #b8b8b8;
  background: linear-gradient(#fafafa, #efefef);
}
.grip {
  width: 6px;
  height: 24px;
  margin: 0 5px 0 12px;
  background: radial-gradient(circle, #b5b5b5 1px, transparent 1px) 0 0 / 4px 4px;
}
.grip:first-child { margin-left: 7px; }

.tools { display: flex; align-items: center; }
.tools svg { flex: 2 1 0; min-width: 0; width: 0; height: 24px; }
.tools .drop { flex: 1 1 0; }
.w1 { width: 36px; }
.w5 { width: 183px; }
.w7 { width: 256px; }
.w8 { width: 292px; }
.w12 { width: 526px; }
.w13 { width: 455px; }
.w14 { width: 511px; }
.w18 { width: 657px; }
.tools .pressed {
  height: 34px;
  padding: 4px 0;
  border: 1px solid #a5a5a5;
  border-radius: 3px;
  background: #dcdcdc;
}
.off, .allOff > * { opacity: .3; filter: grayscale(.7); }

.drop { display: grid; place-items: center; }
.drop::before {
  content: "";
  border: 5px solid transparent;
  border-top: 6px solid #555;
  border-bottom: 0;
}

.work { display: flex; }

.sidetools {
  flex: none;
  width: 63px;
  padding-top: 7px;
  border-right: 1px solid #b5b5b5;
  background: linear-gradient(90deg, #fafafa, #ececec);
}
.sidetools .grip.flat { display: block; width: 24px; height: 8px; margin: 0 0 3px 21px; }
.sidetools div { display: flex; align-items: center; gap: 8px; height: 35px; padding-left: 12px; }
.sidetools svg { width: 24px; height: 24px; }

.docks { flex: none; display: grid; gap: 8px; width: 583px; padding: 0 9px 0 2px; }
.dock h2 {
  display: flex;
  align-items: center;
  justify-content: space-between;
  height: 30px;
  padding: 0 2px 0 4px;
}
.dock h2 span { display: flex; gap: 5px; }
.dock h2 svg { width: 16px; height: 16px; }
.docktools { display: flex; gap: 12px; height: 43px; padding: 8px 0 0 11px; }
.docktools svg { width: 24px; height: 24px; }
.docktools .drop { width: 12px; height: 24px; margin: 0 -3px; }

.listbox { border: 2px solid #b8b8b8; border-width: 2px 1px 2px 2px; background: #fff; }
.browser { height: 575px; padding-top: 1px; }
.layers { height: 594px; padding-top: 1px; }
.tree { display: grid; grid-auto-rows: 1fr; }
.t19 { height: 498px; }
.t7 { height: 184px; }
.tree li { display: flex; align-items: center; gap: 9px; }
.tree svg { width: 24px; height: 22px; }
.tree i { display: grid; place-items: center; width: 23px; height: 20px; padding-left: 2px; }
.tree i.closed::before { content: ""; border: 5px solid transparent; border-left: 6px solid #555; border-right: 0; }
.tree i.opened::before { content: ""; border: 5px solid transparent; border-top: 6px solid #555; border-bottom: 0; }
.tree label { display: flex; align-items: center; gap: 9px; }
.tree .child { padding-left: 61px; font-weight: 700; }
.tree .strong { font-weight: 700; }
.tree .current { background: #efefef; font-weight: 700; }
.tree u { text-underline-offset: 3px; }
.line, .dot, .fill, .blank { width: 24px; }
.line { height: 2px; }
.coral { background: #ee7d55; }
.aqua { background: #b5f5ee; }
.dot { height: 24px; background: radial-gradient(circle, #fff 2px, #6fe6e6 2px, #6fe6e6 4px, transparent 5px); }
.fill { height: 24px; border: 1px solid #5f5840; background: #b39351; }

input[type="checkbox"] {
  appearance: none;
  display: grid;
  place-items: center;
  width: 20px;
  height: 20px;
  border: 2px solid #b8b8b8;
  background: #fff;
}
input[type="checkbox"]:checked::before {
  content: "";
  width: 7px;
  height: 13px;
  border: solid #111;
  border-width: 0 3px 3px 0;
  transform: rotate(35deg);
}

/* map canvas */
.map {
  position: relative;
  flex: 1;
  min-width: 0;
  border: 2px solid #b5b5b5;
  border-right-width: 1px;
  background: #2e3e60;
}
.land { position: absolute; inset: 0; width: 2151px; height: 1319px; max-width: 100%; }
.area { fill: #ff9f17; stroke: #2c2a24; stroke-width: 1; vector-effect: non-scaling-stroke; }
.edge { fill: none; stroke: #2c2a24; stroke-width: 1; vector-effect: non-scaling-stroke; stroke-linejoin: round; }
.track { fill: none; stroke: #d4694b; stroke-width: 1; }

/* layer properties dialog */
.dialog {
  position: absolute;
  left: 514px;
  right: 340px;
  top: 86px;
  border: 1px solid #1a6fb8;
  border-bottom-width: 2px;
  background: #f0f0f0;
  box-shadow: 0 6px 24px rgba(0, 0, 0, .45);
}
.dlgtitle { display: flex; align-items: center; gap: 6px; height: 44px; padding: 0 14px 0 11px; background: #fff; }
.dlgtitle button { margin-left: auto; }
.dlgbody { display: flex; font-size: 15px; }

aside { flex: none; width: 218px; background: #5b5b5b; font-size: 16px; }
.find { display: flex; align-items: center; gap: 4px; height: 31px; padding-left: 7px; border: 2px solid #b8b8b8; background: #fff; }
.find input { width: 160px; border: 0; background: none; outline: 0; }
.pages { display: flex; flex-direction: column; height: 1015px; padding-top: 11px; color: #fff; }
.pages a { flex: 15 1 0; display: flex; align-items: center; gap: 12px; padding: 0 40px 0 6px; white-space: nowrap; }
.pages .two { flex-grow: 16; white-space: normal; }
.pages svg { width: 36px; height: 36px; }
.pages .sel { padding-left: 10px; background: #f0f0f0; color: #111; }

.pane { flex: 1; min-width: 0; }
h3 { display: flex; align-items: center; gap: 12px; padding: 10px 0 4px 10px; font-size: 17px; font-weight: 700; }
h3:first-child { padding: 6px 0 2px 10px; }
h3::before { content: ""; border: 7px solid transparent; border-top: 11px solid #3c3c3c; border-bottom: 0; }

.box {
  position: relative;
  display: grid;
  gap: 9px;
  margin: 0 4px 0 7px;
  padding: 15px 15px 15px 14px;
  border: 2px solid #dadada;
  border-radius: 3px;
  border-width: 2px 2px 2px 1px;
  background: #ececec;
}
.row { display: flex; align-items: center; gap: 9px; }
.row input { flex: 1; min-width: 0; height: 32px; padding: 0 4px; border: 1px solid #acacac; border-radius: 3px; background: #fff; }
.row input.ro { height: 28px; border-width: 2px; background: #efefef; color: #555; }

.combo { position: relative; display: grid; align-items: center; }
.combo > * { grid-area: 1 / 1; }
.combo::after {
  content: "";
  grid-area: 1 / 1;
  justify-self: end;
  margin-right: 11px;
  border: 5px solid transparent;
  border-top: 6px solid #555;
  border-bottom: 0;
  pointer-events: none;
}
select {
  appearance: none;
  width: 100%;
  height: 32px;
  padding: 0 6px;
  border: 1px solid #acacac;
  border-radius: 3px;
  background: linear-gradient(#fff, #f0f0f0);
}
.enc { width: 178px; }
.wide { flex: 1; }
.wide .mark { left: -6px; top: -12px; width: 414px; height: 54px; }

.dlgbody button {
  display: grid;
  place-items: center;
  height: 30px;
  padding: 0 4px;
  border: 1px solid #acacac;
  border-radius: 3px;
  background: linear-gradient(#fff, #f1f1f1);
}
.dlgbody .pick { width: 35px; height: 32px; }
.crs { padding: 13px 15px 25px 14px; }
.crs label { margin-bottom: -2px; }
.pointer { position: absolute; left: 365px; top: 93px; width: 40px; height: 306px; z-index: 2; }

textarea { display: block; width: 100%; height: 650px; border: 2px solid #b8b8b8; background: #f0f0f0; resize: none; }
.filter { padding-top: 14px; }
.filter button { justify-self: end; }
.change { position: absolute; left: 374px; top: 230px; width: 560px; }

.pane footer { display: flex; gap: 9px; padding: 9px 4px 4px 6px; }
.dlgbody .estilo { width: 116px; margin-right: auto; grid-template-columns: 1fr 12px; padding: 0 5px 0 0; }
.act { position: relative; }
.act button { width: 117px; }
.dlgbody .primary { border: 2px solid #42a5f5; background: linear-gradient(#fff, #edf4fb); }
.act .mark { left: -5px; top: -8px; width: 132px; height: 42px; }
.step { position: absolute; left: 28px; top: -75px; }

/* status bar */
.status { display: flex; align-items: center; height: 41px; padding: 0 9px 0 7px; font-size: 15px; }
.locator { display: flex; align-items: center; gap: 8px; width: 372px; height: 32px; padding-left: 7px; border: 1px solid #acacac; border-top-width: 2px; border-radius: 3px; background: #fff; }
.locator input { flex: 1; border: 0; padding: 0; background: none; outline: 0; }
.locator input::placeholder { color: #888; }
.msg { margin: 0 auto 0 9px; }
.status > label { margin: 0 7px 0 9px; }
.status > .locator { margin: 0; }
.status > .ic { margin: 0 6px; }
.status > .ic:last-child { margin-right: 2px; }
#coord { width: 132px; height: 31px; padding: 0 5px; border: 1px solid #acacac; border-radius: 3px; background: #fff; }
.scale { width: 118px; margin-right: 8px; }
.scale select { padding: 0 4px; background: linear-gradient(90deg, #fff 86px, #acacac 86px, #acacac 87px, #f4f4f4 87px); }
.spin { display: flex; width: 124px; height: 29px; border: 1px solid #acacac; border-radius: 3px; background: #fff; }
.spin input { width: 102px; border: 0; padding: 0 6px; background: none; }
.spin b { display: grid; align-content: center; justify-content: center; gap: 5px; width: 20px; border-left: 1px solid #c4c4c4; background: #f6f6f6; }
.spin b::before { content: ""; border: 5px solid transparent; border-bottom: 6px solid #555; border-top: 0; }
.spin b::after { content: ""; border: 5px solid transparent; border-top: 6px solid #555; border-bottom: 0; }
.render { display: flex; align-items: center; gap: 6px; }
.epsg { display: flex; align-items: center; gap: 3px; margin: 0 21px 0 20px; }
```
